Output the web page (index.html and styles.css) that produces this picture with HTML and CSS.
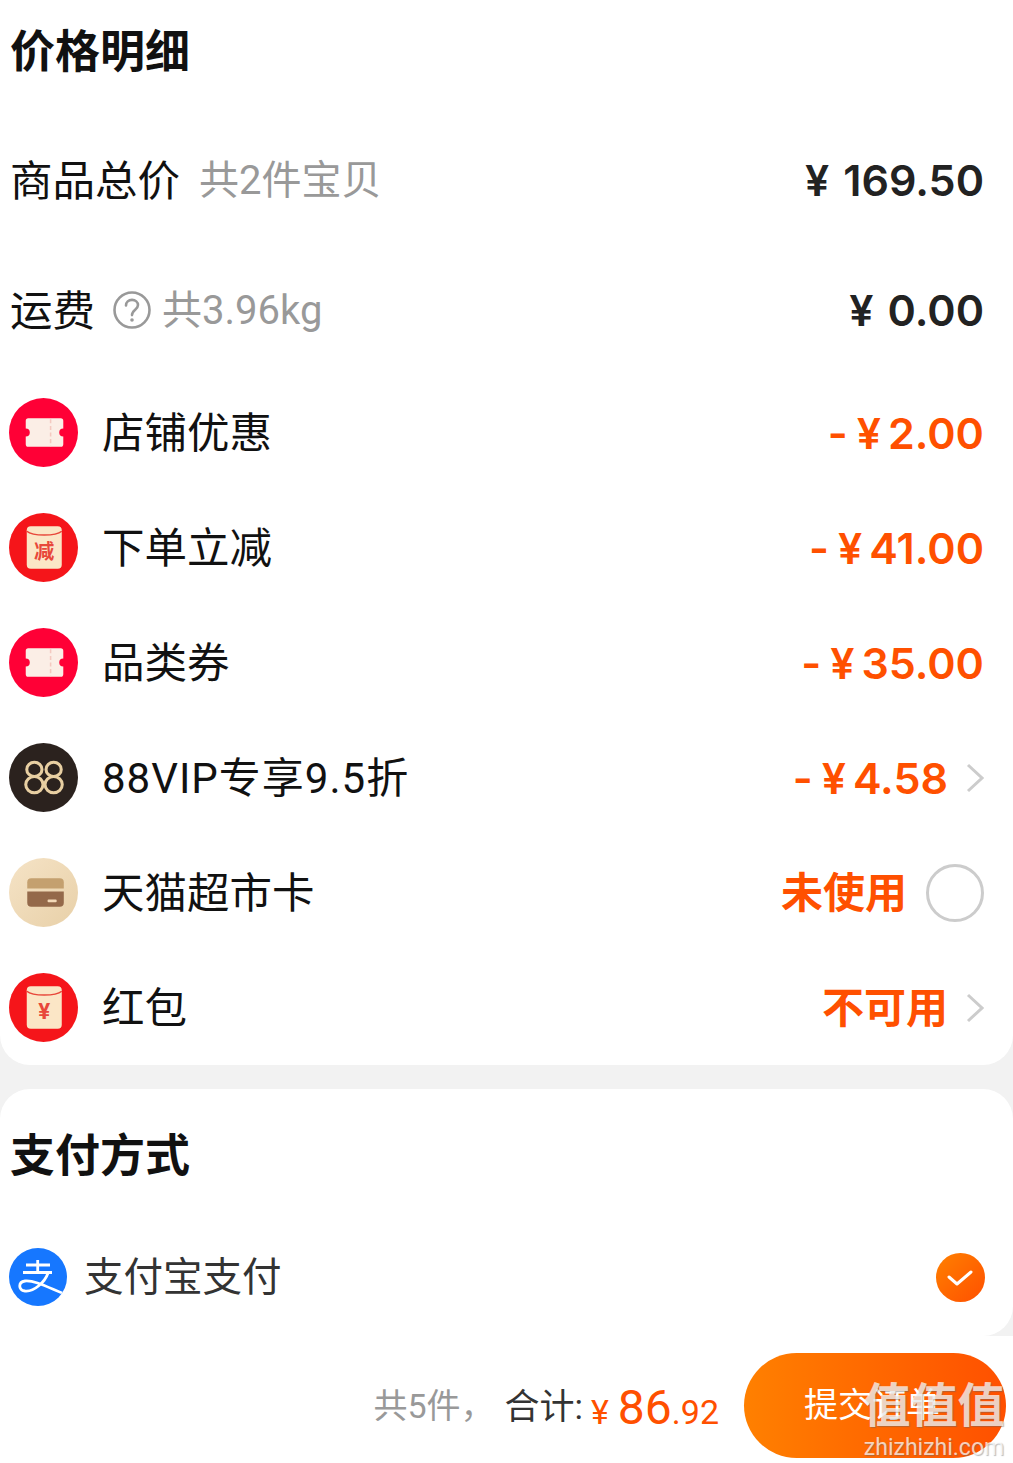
FILE: index.html
```html
<!DOCTYPE html>
<html lang="zh-CN">
<head>
  <meta charset="UTF-8">
  <meta name="viewport" content="width=device-width, initial-scale=1.0">
  <title>确认订单</title>
  <link rel="stylesheet" href="styles.css">
</head>
<body>

<div class="card price-card">
  <div class="card-title price-title">价格明细</div>

  <div class="row row-plain">
    <div class="row-left"><span class="label">商品总价</span><span class="sub sub-goods">共2件宝贝</span></div>
    <div class="amount amount-black"><span class="cur">¥</span>169.50</div>
  </div>

  <div class="row row-plain">
    <div class="row-left">
      <span class="label">运费</span>
      <svg class="help" viewBox="0 0 38 38"><circle cx="19" cy="19" r="17.500" fill="none" stroke="#999" stroke-width="2.600"/><path d="M13 14.500c0-3.500 2.600-5.600 6-5.600s6 2.200 6 5.200c0 4.600-6 4.600-6 10" fill="none" stroke="#999" stroke-width="2.600" stroke-linecap="round"/><circle cx="19" cy="29" r="1.800" fill="#999"/></svg>
      <span class="sub">共3.96kg</span>
    </div>
    <div class="amount amount-black"><span class="cur">¥</span>0.00</div>
  </div>

  <div class="row">
    <div class="row-left">
      <svg class="icon" viewBox="0 0 68 68"><circle cx="34" cy="34" r="34" fill="#ff0036"/><path d="M19 20h32a2.500 2.500 0 0 1 2.500 2.500v7.500a4 4 0 0 0 0 8v7.500a2.500 2.500 0 0 1-2.500 2.500h-32a2.500 2.500 0 0 1-2.500-2.500v-7.500a4 4 0 0 0 0-8v-7.500a2.500 2.500 0 0 1 2.500-2.500z" fill="#fbeee6"/><path d="M41 21v27" stroke="#f4c9c0" stroke-width="1.500" stroke-dasharray="4 2.500"/></svg>
      <span class="label">店铺优惠</span>
    </div>
    <div class="amount"><span class="minus">-</span><span class="cur">¥</span>2.00</div>
  </div>

  <div class="row">
    <div class="row-left">
      <svg class="icon" viewBox="0 0 68 68"><circle cx="34" cy="34" r="34" fill="#f5151a"/><rect x="17.500" y="13" width="34.500" height="42" rx="4" fill="#fbe6c6"/><path d="M17.500 18c6 5 28.500 5 34.500 0" fill="none" stroke="#e8473a" stroke-width="1.500"/><text class="env-text" x="34.700" y="45" font-size="20">减</text></svg>
      <span class="label">下单立减</span>
    </div>
    <div class="amount"><span class="minus">-</span><span class="cur">¥</span>41.00</div>
  </div>

  <div class="row">
    <div class="row-left">
      <svg class="icon" viewBox="0 0 68 68"><circle cx="34" cy="34" r="34" fill="#ff0036"/><path d="M19 20h32a2.500 2.500 0 0 1 2.500 2.500v7.500a4 4 0 0 0 0 8v7.500a2.500 2.500 0 0 1-2.500 2.500h-32a2.500 2.500 0 0 1-2.500-2.500v-7.500a4 4 0 0 0 0-8v-7.500a2.500 2.500 0 0 1 2.500-2.500z" fill="#fbeee6"/><path d="M41 21v27" stroke="#f4c9c0" stroke-width="1.500" stroke-dasharray="4 2.500"/></svg>
      <span class="label">品类券</span>
    </div>
    <div class="amount"><span class="minus">-</span><span class="cur">¥</span>35.00</div>
  </div>

  <div class="row">
    <div class="row-left">
      <svg class="icon" viewBox="0 0 68 68"><circle cx="34" cy="34" r="34" fill="#2b221e"/><g fill="none" stroke="#e8cfa2" stroke-width="3"><ellipse cx="25" cy="26" rx="7.500" ry="7"/><ellipse cx="25" cy="41" rx="8.500" ry="8"/><ellipse cx="44" cy="26" rx="7.500" ry="7"/><ellipse cx="44" cy="41" rx="8.500" ry="8"/></g></svg>
      <span class="label label-vip">88VIP专享9.5折</span>
    </div>
    <div class="row-right">
      <div class="amount"><span class="minus">-</span><span class="cur">¥</span>4.58</div>
      <svg class="chevron" viewBox="0 0 18 30"><path d="M2 2l14 13L2 28" fill="none" stroke="#ccc" stroke-width="3"/></svg>
    </div>
  </div>

  <div class="row">
    <div class="row-left">
      <svg class="icon" viewBox="0 0 68 68"><defs><linearGradient id="cardBg" x1="0" y1="0" x2="1" y2="1"><stop offset="0" stop-color="#f5e3c6"/><stop offset="1" stop-color="#e8d0a8"/></linearGradient></defs><circle cx="34" cy="34" r="34" fill="url(#cardBg)"/><path d="M18 30v-6a4 4 0 0 1 4-4h28a4 4 0 0 1 4 4v6z" fill="#c4a06f"/><path d="M18 33h36v11a4 4 0 0 1-4 4h-28a4 4 0 0 1-4-4z" fill="#94694a"/><rect x="38" y="41" width="9" height="2.500" rx="1" fill="#f3d9b8"/></svg>
      <span class="label">天猫超市卡</span>
    </div>
    <div class="row-right">
      <div class="amount amount-cn">未使用</div>
      <div class="radio"></div>
    </div>
  </div>

  <div class="row">
    <div class="row-left">
      <svg class="icon" viewBox="0 0 68 68"><circle cx="34" cy="34" r="34" fill="#f5151a"/><rect x="17.500" y="13" width="34.500" height="42" rx="4" fill="#fbe6c6"/><path d="M17.500 18c6 5 28.500 5 34.500 0" fill="none" stroke="#e8473a" stroke-width="1.500"/><text class="env-text" x="34.700" y="45" font-size="22">¥</text></svg>
      <span class="label">红包</span>
    </div>
    <div class="row-right">
      <div class="amount amount-cn">不可用</div>
      <svg class="chevron" viewBox="0 0 18 30"><path d="M2 2l14 13L2 28" fill="none" stroke="#ccc" stroke-width="3"/></svg>
    </div>
  </div>
</div>

<div class="card pay-card">
  <div class="card-title pay-title">支付方式</div>
  <div class="pay-row">
    <div class="row-left">
      <svg class="pay-icon" viewBox="0 0 58 58"><defs><clipPath id="payClip"><circle cx="29" cy="29" r="29"/></clipPath></defs><circle cx="29" cy="29" r="29" fill="#1677ff"/><g clip-path="url(#payClip)" fill="none" stroke="#fff" stroke-width="2.800"><path d="M17 17h24M28.700 12v12M14 24.500h29"/><path d="M39 25c-3 9-14 19-23 18-7-1-7-9 0-10 10-1 24 7 42 14" stroke-linecap="round"/></g></svg>
      <span class="pay-name">支付宝支付</span>
    </div>
    <svg class="check" viewBox="0 0 49 49"><defs><linearGradient id="checkBg" x1="0" y1="0" x2="1" y2="1"><stop offset="0" stop-color="#ff8000"/><stop offset="1" stop-color="#ff5000"/></linearGradient></defs><circle cx="24.500" cy="24.500" r="24.500" fill="url(#checkBg)"/><path d="M13 24l8 7 14-12" fill="none" stroke="#fff" stroke-width="3" stroke-linecap="round" stroke-linejoin="round"/></svg>
  </div>
</div>

<div class="footer">
  <span class="count">共5件，</span>
  <span class="total-label">合计:</span>
  <span class="total"><span class="yen">¥</span><span class="int">86</span><span class="dec">.92</span></span>
  <div class="submit">提交订单</div>
</div>

<div class="watermark">
  <div class="wm-big">值值值</div>
  <div class="wm-small">zhizhizhi.com</div>
</div>

</body>
</html>
```

FILE: styles.css
```css
html, body {
  margin: 0;
  padding: 0;
  height: 1463px;
  overflow: hidden;
  background: #f2f2f2;
  font-family: Roboto, "Noto Sans CJK SC", sans-serif;
  color: #111;
}

body {
  position: relative;
  display: flex;
  flex-direction: column;
}

.card {
  background: #fff;
  padding-left: 9px;
  padding-right: 29px;
}

.price-card {
  height: 1065px;
  border-radius: 0 0 30px 30px;
  box-sizing: border-box;
}

.pay-card {
  margin-top: 24px;
  height: 247px;
  box-sizing: border-box;
  border-radius: 30px 30px 30px 0;
  padding-right: 28px;
}

.card-title {
  font-size: 45px;
  font-weight: 700;
  padding-left: 1px;
  box-sizing: border-box;
  display: flex;
  align-items: center;
}

.price-title {
  height: 100px;
  margin-bottom: 15px;
  padding-bottom: 4px;
}

.pay-title {
  height: 134px;
  padding-bottom: 8px;
}

.row {
  height: 115px;
  display: flex;
  align-items: center;
  justify-content: space-between;
}

.row-plain {
  height: 130px;
  padding-left: 1px;
}

.row-left, .row-right {
  display: flex;
  align-items: center;
}

.icon {
  width: 69px;
  height: 69px;
  margin-right: 24px;
  flex: none;
}

.label {
  font-size: 42.500px;
  padding-bottom: 6px;
}

.label-vip {
  font-size: 42px;
  letter-spacing: 1px;
}

.sub {
  font-size: 40px;
  color: #999;
  padding-bottom: 6px;
}

.sub-goods {
  margin-left: 19px;
}

.help {
  width: 38px;
  height: 38px;
  margin: 0 11px 0 18px;
}

.amount {
  font-family: Inter, "Noto Sans CJK SC", sans-serif;
  font-size: 43px;
  font-weight: 600;
  color: #ff5000;
}

.amount-black {
  color: #222;
}

.amount-black .cur {
  margin-right: 14px;
}

.amount-cn {
  font-size: 42px;
  padding-bottom: 7px;
}

.minus {
  margin-right: 9px;
}

.cur {
  margin-right: 7px;
}

.env-text {
  fill: #e8473a;
  font-weight: 700;
  text-anchor: middle;
}

.chevron {
  width: 18px;
  height: 30px;
  margin-left: 18px;
  margin-right: 0;
}

.radio {
  width: 58px;
  height: 58px;
  box-sizing: border-box;
  border: 3px solid #ccc;
  border-radius: 50%;
  margin-left: 19px;
}

.pay-row {
  height: 108px;
  display: flex;
  align-items: center;
  justify-content: space-between;
}

.pay-icon {
  width: 58px;
  height: 58px;
  margin-right: 17px;
  flex: none;
}

.pay-name {
  font-size: 39.500px;
  color: #333;
  padding-bottom: 8px;
}

.check {
  width: 49px;
  height: 49px;
}

.footer {
  flex: 1;
  background: #fff;
  display: flex;
  align-items: center;
  justify-content: flex-end;
  padding: 12px 7px 0 0;
}

.count {
  font-size: 34px;
  color: #999;
  margin-right: 10px;
  width: 121px;
  white-space: nowrap;
  padding-bottom: 5px;
}

.total-label {
  font-size: 35px;
  color: #333;
  padding-bottom: 5px;
}

.total {
  color: #ff5000;
  margin: 4px 0 0 8px;
  display: flex;
  align-items: baseline;
}

.yen {
  font-size: 34px;
  margin-right: 9px;
}

.int {
  font-size: 48px;
}

.dec {
  font-size: 34px;
}

.submit {
  width: 262px;
  height: 105px;
  margin-left: 25px;
  padding: 0 0 6px 60px;
  box-sizing: border-box;
  border-radius: 53px;
  background: linear-gradient(90deg, #ff8000, #ff5000);
  color: #fff;
  font-size: 34px;
  display: flex;
  align-items: center;
}

.watermark {
  position: absolute;
  left: 861px;
  top: 1376px;
  width: 146px;
  text-align: center;
  color: rgba(255, 255, 255, 0.72);
  text-shadow: 1px 1px 1px rgba(100, 100, 100, 0.45);
}

.wm-big {
  font-size: 47px;
  line-height: 60px;
  font-weight: 700;
  white-space: nowrap;
}

.wm-small {
  font-size: 23px;
  line-height: 24px;
}
```
